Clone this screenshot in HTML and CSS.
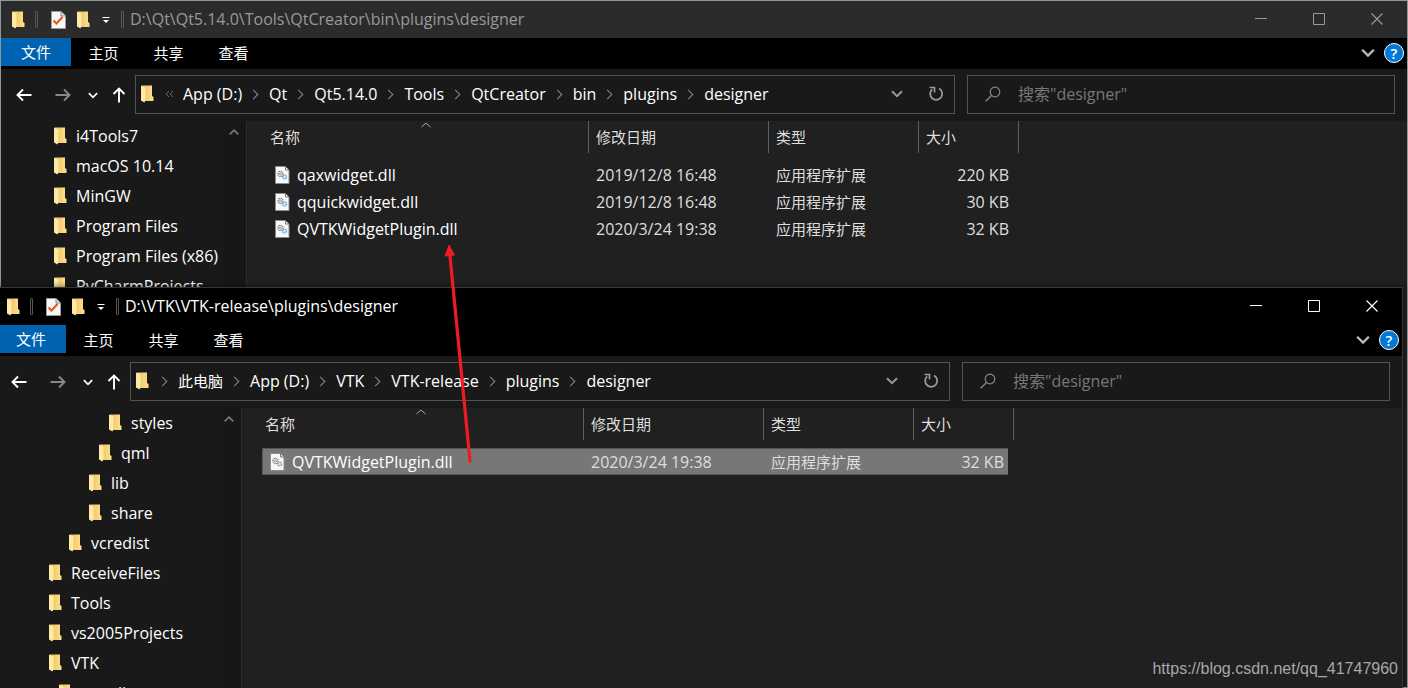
FILE: index.html
```html
<!DOCTYPE html>
<html lang="zh-CN">
<head>
<meta charset="utf-8">
<title>designer</title>
<link rel="stylesheet" href="styles.css">
</head>
<body>
<svg class="defs" aria-hidden="true">
  <defs>
    <linearGradient id="fold" x1="0" x2="1" y1="0" y2="0"><stop offset="0" stop-color="#e9c263"/><stop offset="1" stop-color="#ffe08a"/></linearGradient>
    <symbol id="i-folder" viewBox="0 0 13 18">
      <path d="M1 0.500H11V11L12.500 12V16H1Z" fill="url(#fold)"/>
      <path d="M0 0.500L4.500 2.500V15L3.500 17.500L0 15.500Z" fill="#ffe9a6"/>
    </symbol>
    <symbol id="i-check" viewBox="0 0 15 18">
      <path d="M0.500 0.500H10L14.500 5V17.500H0.500Z" fill="#f7f7f7" stroke="#9a9a9a"/>
      <path d="M10 0.500V5H14.500" fill="#ddd" stroke="#8a8a8a"/>
      <path d="M2.500 9.500L5.500 12.500L11.500 6" fill="none" stroke="#e8541c" stroke-width="2"/>
    </symbol>
    <symbol id="i-drop" viewBox="0 0 8 8"><path d="M0.500 1.500H7.500" stroke="currentColor"/><path d="M1 4H7L4 7Z" fill="currentColor"/></symbol>
    <symbol id="i-dll" viewBox="0 0 15 18">
      <path d="M0.500 0.500H10.500L14 4V17.500H0.500Z" fill="#f8f8f8" stroke="#8c8c8c"/>
      <path d="M10.500 0.500V4H14" fill="none" stroke="#777"/>
      <circle cx="5.500" cy="8" r="2.600" fill="none" stroke="#777" stroke-width="1.300" stroke-dasharray="1.300 .7"/><circle cx="5.500" cy="8" r="1" fill="none" stroke="#777" stroke-width=".7"/>
      <circle cx="9.600" cy="11" r="2" fill="#cfe6f8" stroke="#6f9fc4" stroke-width="1.200" stroke-dasharray="1.300 .5"/>
    </symbol>
    <symbol id="i-back" viewBox="0 0 16 14"><path d="M15.500 7H1.500M7 1.500L1.500 7L7 12.500" fill="none" stroke="currentColor" stroke-width="1.900"/></symbol>
    <symbol id="i-fwd" viewBox="0 0 16 14"><path d="M0.500 7H14.500M9 1.500L14.500 7L9 12.500" fill="none" stroke="currentColor" stroke-width="1.900"/></symbol>
    <symbol id="i-up" viewBox="0 0 14 16"><path d="M7 15.500V1.500M1.500 7L7 1.500L12.500 7" fill="none" stroke="currentColor" stroke-width="1.900"/></symbol>
    <symbol id="i-down" viewBox="0 0 12 8"><path d="M1 1.200L6 6.200L11 1.200" fill="none" stroke="currentColor" stroke-width="2"/></symbol>
    <symbol id="i-more" viewBox="0 0 9 8"><path d="M4 1L1 4L4 7M8 1L5 4L8 7" fill="none" stroke="currentColor"/></symbol>
    <symbol id="i-reload" viewBox="0 0 16 16"><path d="M11 2.500A6 6 0 1 1 4.200 3.300" fill="none" stroke="currentColor" stroke-width="1.800"/><path d="M1.500 1.500H6.500V6.500" fill="none" stroke="currentColor" stroke-width="1.700"/></symbol>
    <symbol id="i-search" viewBox="0 0 16 16"><circle cx="10" cy="6" r="4.800" fill="none" stroke="currentColor" stroke-width="1.200"/><path d="M6.500 9.500L0.700 15.300" stroke="currentColor" stroke-width="1.300"/></symbol>
    <symbol id="i-min" viewBox="0 0 12 12"><path d="M0 5.500H12" stroke="currentColor"/></symbol>
    <symbol id="i-max" viewBox="0 0 12 12"><path d="M0.500 0.500H11.500V11.500H0.500Z" fill="none" stroke="currentColor"/></symbol>
    <symbol id="i-close" viewBox="0 0 12 12"><path d="M0.500 0.500L11.500 11.500M11.500 0.500L0.500 11.500" stroke="currentColor" stroke-width="1.200"/></symbol>
    <symbol id="i-sort" viewBox="0 0 10 6"><path d="M0.500 5L5 1L9.500 5" fill="none" stroke="currentColor"/></symbol>
    <symbol id="i-scroll" viewBox="0 0 10 6"><path d="M0.700 5.300L5 1.200L9.300 5.300" fill="none" stroke="currentColor" stroke-width="1.800"/></symbol>
  </defs>
</svg>

<div class="desktop">
  <section class="window inactive">
    <header class="titlebar">
      <svg class="folder"><use href="#i-folder"/></svg>
      <i class="grip"></i>
      <svg class="page check"><use href="#i-check"/></svg>
      <svg class="folder"><use href="#i-folder"/></svg>
      <button class="quick" aria-label="自定义"><svg class="s8"><use href="#i-drop"/></svg></button>
      <i class="grip last"></i>
      <h1 class="title">D:\Qt\Qt5.14.0\Tools\QtCreator\bin\plugins\designer</h1>
      <div class="controls">
        <button aria-label="最小化"><svg class="s12"><use href="#i-min"/></svg></button>
        <button aria-label="最大化"><svg class="s12"><use href="#i-max"/></svg></button>
        <button aria-label="关闭"><svg class="s12"><use href="#i-close"/></svg></button>
      </div>
    </header>
    <nav class="ribbon">
      <button class="file">文件</button><button>主页</button><button>共享</button><button>查看</button>
      <button class="expand" aria-label="展开"><svg class="caret big"><use href="#i-down"/></svg></button>
      <button class="help" aria-label="帮助">?</button>
    </nav>
    <div class="navbar">
      <button aria-label="后退"><svg class="back"><use href="#i-back"/></svg></button>
      <button class="off" aria-label="前进"><svg class="back"><use href="#i-fwd"/></svg></button>
      <button class="recent" aria-label="最近"><svg class="caret small"><use href="#i-down"/></svg></button>
      <button class="parent" aria-label="上移"><svg class="up"><use href="#i-up"/></svg></button>
      <div class="address">
        <svg class="folder"><use href="#i-folder"/></svg>
        <svg class="more"><use href="#i-more"/></svg>
        <ol class="crumbs"><li>App (D:)</li><li>Qt</li><li>Qt5.14.0</li><li>Tools</li><li>QtCreator</li><li>bin</li><li>plugins</li><li>designer</li></ol>
        <button class="history" aria-label="历史"><svg class="caret"><use href="#i-down"/></svg></button>
        <button class="reload" aria-label="刷新"><svg class="s16"><use href="#i-reload"/></svg></button>
      </div>
      <label class="search"><svg class="s16"><use href="#i-search"/></svg><input type="text" placeholder='搜索"designer"' aria-label="搜索"></label>
    </div>
    <div class="body">
      <aside class="side">
        <ul class="tree">
          <li><svg class="folder"><use href="#i-folder"/></svg>i4Tools7</li>
          <li><svg class="folder"><use href="#i-folder"/></svg>macOS 10.14</li>
          <li><svg class="folder"><use href="#i-folder"/></svg>MinGW</li>
          <li><svg class="folder"><use href="#i-folder"/></svg>Program Files</li>
          <li><svg class="folder"><use href="#i-folder"/></svg>Program Files (x86)</li>
          <li><svg class="folder"><use href="#i-folder"/></svg>PyCharmProjects</li>
        </ul>
        <div class="scroll"><svg class="sort"><use href="#i-scroll"/></svg></div>
      </aside>
      <main class="files">
        <table>
          <thead><tr><th class="name">名称<svg class="sort"><use href="#i-sort"/></svg></th><th class="date">修改日期</th><th class="type">类型</th><th class="size">大小</th></tr></thead>
          <tbody>
            <tr><td><svg class="page"><use href="#i-dll"/></svg>qaxwidget.dll</td><td>2019/12/8 16:48</td><td>应用程序扩展</td><td>220 KB</td></tr>
            <tr><td><svg class="page"><use href="#i-dll"/></svg>qquickwidget.dll</td><td>2019/12/8 16:48</td><td>应用程序扩展</td><td>30 KB</td></tr>
            <tr><td><svg class="page"><use href="#i-dll"/></svg>QVTKWidgetPlugin.dll</td><td>2020/3/24 19:38</td><td>应用程序扩展</td><td>32 KB</td></tr>
          </tbody>
        </table>
      </main>
    </div>
  </section>

  <section class="window front">
    <header class="titlebar">
      <svg class="folder"><use href="#i-folder"/></svg>
      <i class="grip"></i>
      <svg class="page check"><use href="#i-check"/></svg>
      <svg class="folder"><use href="#i-folder"/></svg>
      <button class="quick" aria-label="自定义"><svg class="s8"><use href="#i-drop"/></svg></button>
      <i class="grip last"></i>
      <h1 class="title">D:\VTK\VTK-release\plugins\designer</h1>
      <div class="controls">
        <button aria-label="最小化"><svg class="s12"><use href="#i-min"/></svg></button>
        <button aria-label="最大化"><svg class="s12"><use href="#i-max"/></svg></button>
        <button aria-label="关闭"><svg class="s12"><use href="#i-close"/></svg></button>
      </div>
    </header>
    <nav class="ribbon">
      <button class="file">文件</button><button>主页</button><button>共享</button><button>查看</button>
      <button class="expand" aria-label="展开"><svg class="caret big"><use href="#i-down"/></svg></button>
      <button class="help" aria-label="帮助">?</button>
    </nav>
    <div class="navbar">
      <button aria-label="后退"><svg class="back"><use href="#i-back"/></svg></button>
      <button class="off" aria-label="前进"><svg class="back"><use href="#i-fwd"/></svg></button>
      <button class="recent" aria-label="最近"><svg class="caret small"><use href="#i-down"/></svg></button>
      <button class="parent" aria-label="上移"><svg class="up"><use href="#i-up"/></svg></button>
      <div class="address">
        <svg class="folder"><use href="#i-folder"/></svg>
        <ol class="crumbs rooted"><li class="han">此电脑</li><li>App (D:)</li><li>VTK</li><li>VTK-release</li><li>plugins</li><li>designer</li></ol>
        <button class="history" aria-label="历史"><svg class="caret"><use href="#i-down"/></svg></button>
        <button class="reload" aria-label="刷新"><svg class="s16"><use href="#i-reload"/></svg></button>
      </div>
      <label class="search"><svg class="s16"><use href="#i-search"/></svg><input type="text" placeholder='搜索"designer"' aria-label="搜索"></label>
    </div>
    <div class="body">
      <aside class="side">
        <ul class="tree">
          <li class="d6"><svg class="folder"><use href="#i-folder"/></svg>styles</li>
          <li class="d5"><svg class="folder"><use href="#i-folder"/></svg>qml</li>
          <li class="d4"><svg class="folder"><use href="#i-folder"/></svg>lib</li>
          <li class="d4"><svg class="folder"><use href="#i-folder"/></svg>share</li>
          <li class="d2"><svg class="folder"><use href="#i-folder"/></svg>vcredist</li>
          <li><svg class="folder"><use href="#i-folder"/></svg>ReceiveFiles</li>
          <li><svg class="folder"><use href="#i-folder"/></svg>Tools</li>
          <li><svg class="folder"><use href="#i-folder"/></svg>vs2005Projects</li>
          <li><svg class="folder"><use href="#i-folder"/></svg>VTK</li>
          <li class="d1"><svg class="folder"><use href="#i-folder"/></svg>vcredist</li>
        </ul>
        <div class="scroll"><svg class="sort"><use href="#i-scroll"/></svg></div>
      </aside>
      <main class="files">
        <table>
          <thead><tr><th class="name">名称<svg class="sort"><use href="#i-sort"/></svg></th><th class="date">修改日期</th><th class="type">类型</th><th class="size">大小</th></tr></thead>
          <tbody>
            <tr class="selected"><td><svg class="page"><use href="#i-dll"/></svg>QVTKWidgetPlugin.dll</td><td>2020/3/24 19:38</td><td>应用程序扩展</td><td>32 KB</td></tr>
          </tbody>
        </table>
      </main>
    </div>
  </section>

  <svg class="arrow" viewBox="0 0 32 220" aria-hidden="true"><path d="M27 216L7 11" stroke="#ed1c24" stroke-width="3.200" stroke-linecap="round"/><path d="M6 0L11.500 10L2 11Z" fill="#ed1c24" stroke="#ed1c24"/></svg>
  <p class="watermark">https://blog.csdn.net/qq_41747960</p>
</div>
</body>
</html>
```
FILE: styles.css
```css
* { box-sizing: border-box; }
body {
  margin: 0;
  background: #1c1c1c;
  color: #fff;
  font: 16px/20px "Open Sans", "Noto Sans CJK SC", sans-serif;
}
button { font: inherit; color: inherit; background: none; border: 0; padding: 0; }
svg { display: block; flex: none; }
ul, ol { list-style: none; margin: 0; padding: 0; }
.defs { position: absolute; width: 0; height: 0; }
.desktop { position: relative; height: 100vh; overflow: hidden; }

.window { display: flex; flex-direction: column; background: #191919; border: 1px solid #8f9797; }
.inactive { height: 100%; }
.front {
  position: absolute;
  top: 287px;
  right: 5px;
  bottom: -1px;
  left: -5px;
  border-color: #383838;
  box-shadow: 0 0 6px rgba(0, 0, 0, .6);
}

.folder { width: 13px; height: 18px; }
.page { width: 15px; height: 18px; }
.s8 { width: 8px; height: 8px; }
.s12 { width: 12px; height: 12px; }
.s16 { width: 16px; height: 16px; }

.titlebar { display: flex; align-items: center; height: 37px; padding-left: 11px; background: #000; }
.inactive .titlebar { background: #2b2b2b; }
.grip { width: 3px; height: 17px; margin: 0 13px 0 10px; border: 1px solid #555; border-radius: 1px; }
.grip.last { margin: 0 6px 0 11px; }
.check { margin-right: 11px; }
.quick { margin-left: 12px; }
.title { margin: 0; padding-bottom: 2px; font: inherit; flex: 1; white-space: nowrap; }
.inactive .title, .inactive .controls { color: #999; }
.controls { display: flex; align-self: flex-start; padding-right: 1px; }
.controls button { display: grid; place-items: center; width: 58px; height: 36px; }

.ribbon {
  display: flex;
  align-items: flex-start;
  height: 31px;
  padding-right: 3px;
  background: #000;
  font-size: 15px;
}
.ribbon button { width: 65px; height: 30px; }
.ribbon .file { width: 70px; height: 28px; background: #0063b1; }
.ribbon .expand { display: grid; place-items: center; width: 20px; height: 30px; margin-left: auto; }
.ribbon .help {
  width: 20px;
  height: 20px;
  margin: 5px 0 0 6px;
  border: 1px solid #fff;
  border-radius: 50%;
  background: #0078d7;
  font-weight: 600;
  line-height: 18px;
}
.caret { width: 12px; height: 8px; color: #999; }
.caret.small { width: 10px; height: 7px; color: #fff; }
.caret.big { width: 14px; height: 10px; color: #bbb; }

.navbar { display: flex; align-items: center; height: 52px; padding: 0 12px 0 15px; }
.back { width: 16px; height: 14px; }
.up { width: 14px; height: 16px; }
.off { margin-left: 23px; color: #888; }
.recent { margin-left: 17px; }
.parent { margin: 0 9px 0 14px; }
.address, .search { display: flex; align-items: center; height: 39px; margin-bottom: 2px; border: 1px solid #535353; }
.address { flex: 1 1 820px; padding-left: 5px; }
.search { flex: 1 1 428px; margin-left: 12px; padding-left: 17px; color: #888; }
.search input {
  flex: 1;
  min-width: 0;
  margin-left: 17px;
  padding: 0;
  border: 0;
  outline: 0;
  background: none;
  color: #fff;
  font: inherit;
}
.search input::placeholder { color: #777; opacity: 1; }
.more { width: 9px; height: 8px; margin: 0 9px 0 11px; color: #666; }
.crumbs { display: flex; flex: 1; white-space: nowrap; }
.crumbs li { display: flex; align-items: center; }
.crumbs .han { font-size: 15px; }
.crumbs li + li::before, .rooted li::before {
  content: "";
  width: 6px;
  height: 6px;
  margin: 0 12px 0 8px;
  border: solid #888;
  border-width: 1px 1px 0 0;
  transform: rotate(45deg);
}
.rooted { padding-left: 2px; }
.history { margin-right: 15px; }
.reload { padding: 0 10px; color: #999; }

.body { display: flex; flex: 1; min-height: 0; }
.side { display: flex; width: 245px; }
.tree { flex: 1; overflow: hidden; }
.tree li { display: flex; align-items: center; gap: 9px; height: 30px; padding-left: 53px; white-space: nowrap; }
.tree .d1 { padding-left: 63px; }
.tree .d2 { padding-left: 73px; }
.tree .d4 { padding-left: 93px; }
.tree .d5 { padding-left: 103px; }
.tree .d6 { padding-left: 113px; }
.scroll { width: 23px; padding: 8px 6px; background: #171717; }
.sort { width: 10px; height: 6px; color: #aaa; }
.scroll .sort { color: #777; }

.files { flex: 1; padding-left: 20px; background: #202020; border-left: 1px solid #2d2d2d; overflow: hidden; }
table { width: 752px; table-layout: fixed; border-spacing: 0; }
th {
  height: 32px;
  padding: 0 0 0 7px;
  border-right: 1px solid #5f5f5f;
  color: #dedede;
  font-size: 15px;
  font-weight: 400;
  text-align: left;
}
.name { position: relative; width: 322px; padding-left: 3px; }
.name .sort { position: absolute; top: 1px; left: 50%; margin-left: -7px; }
.date { width: 180px; }
.type { width: 150px; }
.size { width: 100px; }
tbody::before { content: ""; display: block; height: 8px; }
td { height: 27px; padding: 0 0 0 7px; color: #dedede; font-size: 15px; }
td:first-child { display: flex; align-items: center; gap: 7px; padding-left: 8px; color: #fff; font-size: 16px; }
td:nth-child(2) { font-size: 16px; }
td:last-child { padding-right: 4px; border-right: 6px solid transparent; background-clip: padding-box; text-align: right; font-size: 16px; }
.selected td { background-color: #777; box-shadow: inset 0 1px #555, inset 0 -1px #555; }
.selected td:first-child { box-shadow: inset 0 1px #555, inset 0 -1px #555, inset 1px 0 #555; }

.arrow { position: absolute; top: 245px; left: 443px; width: 32px; height: 220px; }
.watermark {
  position: absolute;
  right: 10px;
  bottom: 9px;
  margin: 0;
  color: #a8a8a8;
  font: 16px/20px "Liberation Sans", sans-serif;
}
```
